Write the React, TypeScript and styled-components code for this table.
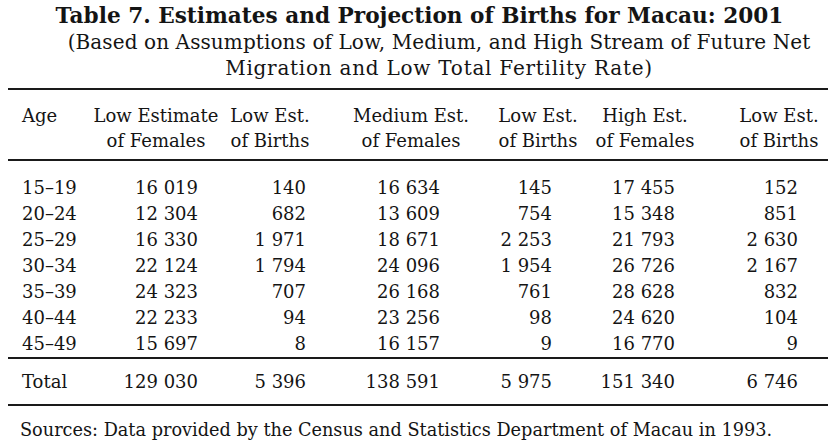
import React from 'react';
import styled, { createGlobalStyle } from 'styled-components';

const GlobalStyle = createGlobalStyle`
  html, body {
    margin: 0;
    padding: 0;
    background: #fff;
  }

  body {
    font-family: 'DejaVu Serif', 'Liberation Serif', serif;
    color: #141414;
  }
`;

const COLUMNS = '90px 132px 108px 158px 102px 110px 132px';

const Page = styled.div`
  width: 832px;
  height: 448px;
  overflow: hidden;
  background: #fff;
`;

const Caption = styled.header`
  padding-top: 3px;
  text-align: center;
`;

const Title = styled.h1`
  margin: 0;
  padding-left: 7px;
  font-size: 21.6px;
  line-height: 26px;
  font-weight: 700;
  white-space: nowrap;
`;

const Subtitle = styled.p`
  margin: 0;
  padding-left: 46px;
  font-size: 20px;
  line-height: 26px;
  font-weight: 400;
`;

const SubLine = styled.span<{ $spacing: number }>`
  display: block;
  letter-spacing: ${({ $spacing }) => $spacing}px;
  white-space: nowrap;
`;

const Rule = styled.div<{ $top: number }>`
  margin: ${({ $top }) => $top}px 4px 0 8px;
  height: 2px;
  background: #1a1a1a;
`;

const Grid = styled.div<{ $top: number; $bottom: number; $line: number }>`
  display: grid;
  grid-template-columns: ${COLUMNS};
  padding: ${({ $top }) => $top}px 0 ${({ $bottom }) => $bottom}px;
  font-size: 18px;
  line-height: ${({ $line }) => $line}px;
`;

const HeadCell = styled.div<{ $left: number; $right: number; $align: string }>`
  padding: 0 ${({ $right }) => $right}px 0 ${({ $left }) => $left}px;
  text-align: ${({ $align }) => $align};
  white-space: nowrap;
`;

const AgeCell = styled.div`
  padding-left: 22px;
  white-space: nowrap;
`;

const NumCell = styled.div<{ $right: number }>`
  padding-right: ${({ $right }) => $right}px;
  text-align: right;
  white-space: nowrap;
`;

const Source = styled.p`
  margin: 11px 0 0;
  padding-left: 20px;
  font-size: 17.7px;
  line-height: 26px;
  white-space: nowrap;
`;

type Column = {
  head: string[];
  pad: [number, number];
  num: number;
};

const columns: Column[] = [
  { head: ['Age'], pad: [22, 0], num: 0 },
  { head: ['Low Estimate', 'of Females'], pad: [0, 0], num: 24 },
  { head: ['Low Est.', 'of Births'], pad: [0, 12], num: 24 },
  { head: ['Medium Est.', 'of Females'], pad: [4, 0], num: 48 },
  { head: ['Low Est.', 'of Births'], pad: [0, 2], num: 38 },
  { head: ['High Est.', 'of Females'], pad: [0, 0], num: 25 },
  { head: ['Low Est.', 'of Births'], pad: [26, 0], num: 34 },
];

const rows: string[][] = [
  ['15–19', '16 019', '140', '16 634', '145', '17 455', '152'],
  ['20–24', '12 304', '682', '13 609', '754', '15 348', '851'],
  ['25–29', '16 330', '1 971', '18 671', '2 253', '21 793', '2 630'],
  ['30–34', '22 124', '1 794', '24 096', '1 954', '26 726', '2 167'],
  ['35–39', '24 323', '707', '26 168', '761', '28 628', '832'],
  ['40–44', '22 233', '94', '23 256', '98', '24 620', '104'],
  ['45–49', '15 697', '8', '16 157', '9', '16 770', '9'],
];

const total = ['Total', '129 030', '5 396', '138 591', '5 975', '151 340', '6 746'];

const renderRow = (row: string[]) =>
  row.map((value, i) =>
    i === 0 ? (
      <AgeCell key={`${row[0]}-${i}`}>{value}</AgeCell>
    ) : (
      <NumCell key={`${row[0]}-${i}`} $right={columns[i].num}>
        {value}
      </NumCell>
    )
  );

const App: React.FC = () => {
  return (
    <Page>
      <GlobalStyle />
      <Caption>
        <Title>Table 7. Estimates and Projection of Births for Macau: 2001</Title>
        <Subtitle>
          <SubLine $spacing={0.1}>(Based on Assumptions of Low, Medium, and High Stream of Future Net</SubLine>
          <SubLine $spacing={0.75}>Migration and Low Total Fertility Rate)</SubLine>
        </Subtitle>
      </Caption>
      <Rule $top={7} />
      <Grid $top={13} $bottom={6} $line={25}>
        {columns.map((col, i) => (
          <HeadCell key={i} $left={col.pad[0]} $right={col.pad[1]} $align={i === 0 ? 'left' : 'center'}>
            {col.head.map((line, j) => (
              <div key={j}>{line}</div>
            ))}
          </HeadCell>
        ))}
      </Grid>
      <Rule $top={0} />
      <Grid $top={14} $bottom={0} $line={26}>
        {rows.map(renderRow)}
      </Grid>
      <Rule $top={0} />
      <Grid $top={10} $bottom={9} $line={26}>
        {renderRow(total)}
      </Grid>
      <Rule $top={0} />
      <Source>Sources: Data provided by the Census and Statistics Department of Macau in 1993.</Source>
    </Page>
  );
};

export default App;
